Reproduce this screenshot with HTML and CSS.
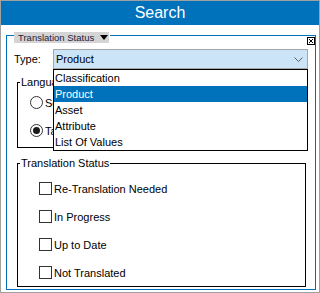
FILE: index.html
```html
<!DOCTYPE html>
<html lang="en">
<head>
  <meta charset="UTF-8" />
  <title>Search</title>
  <link rel="stylesheet" href="styles.css">
</head>
<body>

  <div class="window">
    <div class="header">Search</div>

    <div class="panel">
      <div class="panel-title">
        <span>Translation Status</span>
        <svg width="8" height="5" viewBox="0 0 8 5"><polygon points="0,0 8,0 4,5" fill="#000"/></svg>
      </div>
      <svg class="close-box" width="8" height="8" viewBox="0 0 8 8">
        <rect x="0.5" y="0.5" width="7" height="7" fill="#fff" stroke="#000"/>
        <path d="M2 2 L6 6 M6 2 L2 6" stroke="#000" stroke-width="1"/>
      </svg>

      <div class="type-row">
        <span class="type-label">Type:</span>
        <div class="combo">
          <span>Product</span>
          <svg width="9" height="5" viewBox="0 0 9 5"><path d="M0.5 0.5 L4.5 4.5 L8.5 0.5" fill="none" stroke="#606060" stroke-width="1"/></svg>
          <ul class="dropdown">
            <li>Classification</li>
            <li class="selected">Product</li>
            <li>Asset</li>
            <li>Attribute</li>
            <li>List Of Values</li>
          </ul>
        </div>
      </div>

      <div class="group lang">
        <span class="group-title">Language</span>
        <div class="opt"><span class="radio"></span><span>Source</span></div>
        <div class="opt"><span class="radio checked"></span><span>Target</span></div>
      </div>

      <div class="group status">
        <span class="group-title">Translation Status</span>
        <div class="opt"><span class="check"></span><span>Re-Translation Needed</span></div>
        <div class="opt"><span class="check"></span><span>In Progress</span></div>
        <div class="opt"><span class="check"></span><span>Up to Date</span></div>
        <div class="opt"><span class="check"></span><span>Not Translated</span></div>
      </div>
    </div>
  </div>

</body>
</html>
```

FILE: styles.css
```css
body {
  margin: 0;
  font-family: "Liberation Sans", Arial, sans-serif;
  font-size: 11px;
  color: #000;
  background: #fff;
}

.window {
  width: 320px;
  height: 293px;
  box-sizing: border-box;
  border: 1px solid #a0a0a0;
  background: #fff;
}

.header {
  height: 24px;
  background: #0072bc;
  color: #fff;
  font-size: 16px;
  line-height: 24px;
  text-align: center;
}

.panel {
  position: relative;
  height: 255px;
  margin: 10px 3px 0 5px;
  padding: 0 7px;
  box-sizing: border-box;
  border: 1px solid #0072bc;
}

.panel-title {
  position: absolute;
  top: -4px;
  left: 7px;
  width: 96px;
  height: 11px;
  box-sizing: border-box;
  padding: 0 1px 0 4px;
  border-right: 1px solid #fff;
  background: #d4d4d4;
  color: #1c1c3c;
  font-size: 9.5px;
  line-height: 11px;
  white-space: nowrap;
  display: flex;
  align-items: center;
  justify-content: space-between;
}

.close-box {
  position: absolute;
  top: 1px;
  right: 0;
}

.type-row {
  display: flex;
  align-items: center;
  padding-top: 13px;
}

.type-label {
  width: 39px;
}

.combo {
  position: relative;
  flex: 1;
  height: 20px;
  box-sizing: border-box;
  padding: 0 4px 0 2px;
  border: 1px solid #a6a6a6;
  background: #cce4f7;
  display: flex;
  align-items: center;
  justify-content: space-between;
}

.dropdown {
  position: absolute;
  top: calc(100% + 1px);
  left: -1px;
  right: -1px;
  z-index: 2;
  list-style: none;
  margin: 0;
  padding: 0;
  border: 1px solid #000;
  background: #fff;
}

.dropdown li {
  height: 16px;
  line-height: 16px;
  padding-left: 1px;
}

.dropdown li.selected {
  background: #0072bc;
  color: #fff;
}

.group {
  position: relative;
  margin: 0 2px 0 3px;
  box-sizing: border-box;
  border: 1px solid #000;
  display: flex;
  flex-direction: column;
  gap: 15px;
}

.group-title {
  position: absolute;
  top: -8px;
  left: 2px;
  padding: 0 1px;
  background: #fff;
  line-height: 15px;
}

.lang {
  height: 66px;
  margin-top: 13px;
  padding: 13px 0 0 12px;
}

.status {
  height: 124px;
  margin-top: 15px;
  padding: 18px 0 0 21px;
}

.opt {
  height: 13px;
  display: flex;
  align-items: center;
  gap: 2px;
  white-space: nowrap;
}

.radio {
  width: 13px;
  height: 13px;
  box-sizing: border-box;
  border: 1px solid #333;
  border-radius: 50%;
  display: flex;
  align-items: center;
  justify-content: center;
}

.radio.checked::after {
  content: "";
  width: 7px;
  height: 7px;
  border-radius: 50%;
  background: #1a1a1a;
}

.check {
  width: 13px;
  height: 13px;
  box-sizing: border-box;
  border: 1px solid #333;
  background: #fff;
}
```
